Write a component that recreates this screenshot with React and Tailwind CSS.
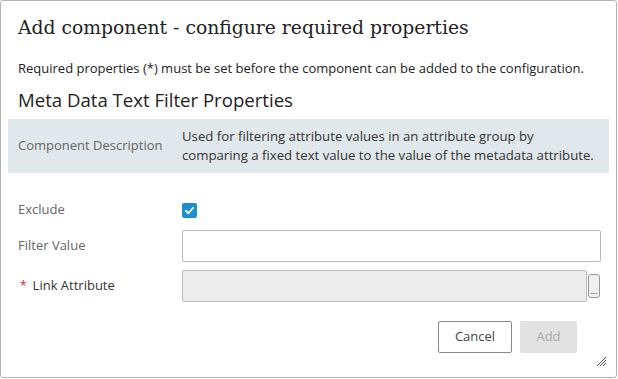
import React from 'react';

const sans = { fontFamily: '"Open Sans", "Noto Sans", sans-serif' };

const App = () => {
    return (
        <div className="w-[618px] h-[379px] bg-white" style={sans}>
            <div className="relative w-[617px] h-[378px] border border-[#b4b4b4] rounded-[3px] bg-white">
                {/* Header */}
                <div className="px-[17px] pt-[14px]">
                    <h1 className="text-[18.75px] leading-[26px] text-[#222] whitespace-nowrap" style={{ fontFamily: '"DejaVu Serif", serif' }}>
                        Add component - configure required properties
                    </h1>
                    <p className="mt-[18px] text-[13px] leading-[18px] text-[#222] whitespace-nowrap">
                        Required properties (*) must be set before the component can be added to the configuration.
                    </p>
                    <h2 className="mt-[10px] text-[18.6px] leading-[26px] text-[#222]">Meta Data Text Filter Properties</h2>
                </div>

                {/* Description panel */}
                <div className="mx-[7px] mt-[6px] flex items-center bg-[#e1e8eb] h-[54px]">
                    <div className="w-[174px] pl-[10px] text-[13px] text-[#666] whitespace-nowrap">Component Description</div>
                    <div className="text-[13.2px] leading-[19px] text-[#333] whitespace-nowrap">
                        Used for filtering attribute values in an attribute group by
                        <br />
                        comparing a fixed text value to the value of the metadata attribute.
                    </div>
                </div>

                {/* Form rows */}
                <div className="mt-[26px] flex flex-col text-[13px]">
                    <div className="flex items-center h-[22px]">
                        <div className="w-[181px] pl-[17px] text-[#666]">Exclude</div>
                        <div className="w-[15px] h-[15px] rounded-[2px] bg-[#1b8fd2] flex items-center justify-center">
                            <svg width="11" height="11" viewBox="0 0 12 12" fill="none">
                                <path d="M2 6.3 L4.8 9 L10 3.2" stroke="white" strokeWidth="2" strokeLinecap="round" strokeLinejoin="round" />
                            </svg>
                        </div>
                    </div>
                    <div className="flex items-center mt-[9px] h-[32px]">
                        <div className="w-[181px] pl-[17px] text-[#666]">Filter Value</div>
                        <div className="w-[419px] h-[32px] border border-[#b8b8b8] rounded-[2px] bg-white"></div>
                    </div>
                    <div className="flex items-center mt-[8px] h-[32px]">
                        <div className="w-[181px] pl-[19px] text-[#333] flex items-center">
                            <span className="text-[#d9262c] mr-[6px] text-[12px]">*</span>
                            <span>Link Attribute</span>
                        </div>
                        <div className="w-[405px] h-[32px] border border-[#bdbdbd] rounded-[2px] bg-[#ececec]"></div>
                        <div className="ml-[1px] w-[12px] h-[24px] border border-[#999] rounded-[3px] bg-[#f0f0f0] flex items-end justify-center pb-[2px]">
                            <span className="text-[9px] leading-[9px] text-[#333]">...</span>
                        </div>
                    </div>
                </div>

                {/* Buttons */}
                <div className="mt-[19px] flex justify-end pr-[39px] gap-[8px] text-[13px]">
                    <div className="w-[74px] h-[32px] border border-[#888] rounded-[2px] flex items-center justify-center text-[#444]">Cancel</div>
                    <div className="w-[57px] h-[32px] rounded-[2px] bg-[#e2e2e2] flex items-center justify-center text-[#aaa]">Add</div>
                </div>

                {/* Resize grip */}
                <svg className="absolute right-[9px] bottom-[10px]" width="11" height="11" viewBox="0 0 11 11">
                    <path d="M1 10 L10 1 M4 10 L10 4 M7 10 L10 7" stroke="#555" strokeWidth="1" />
                </svg>
            </div>
        </div>
    );
};

export default App;
